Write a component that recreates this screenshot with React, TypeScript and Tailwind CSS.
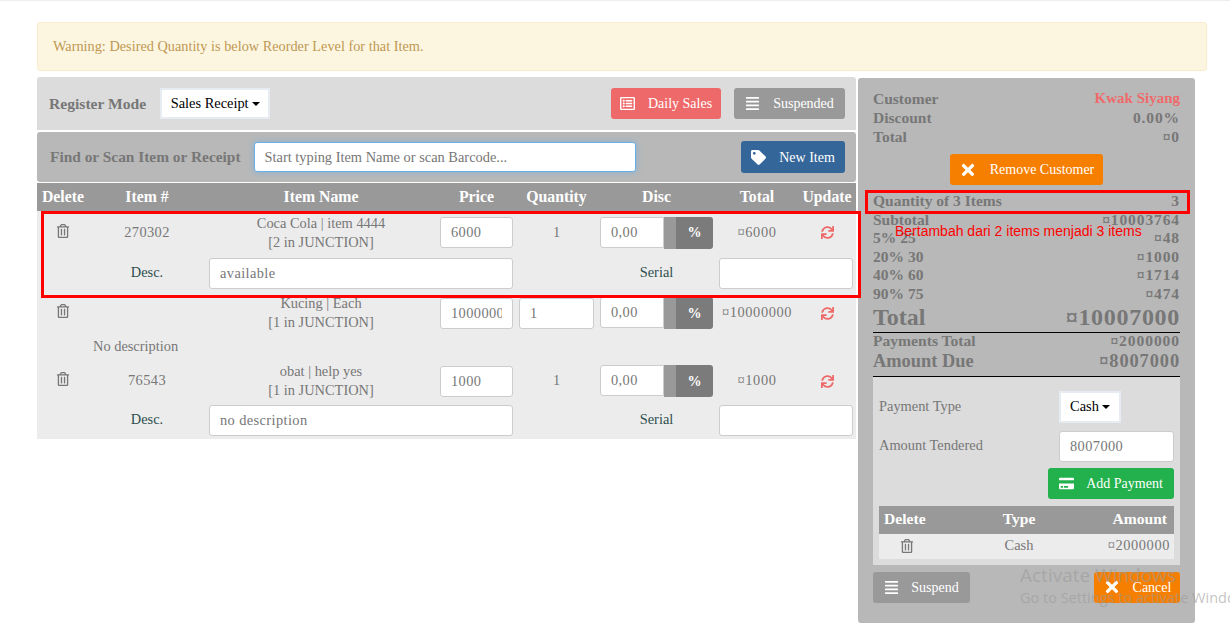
import type { FC, ReactNode } from 'react'
import { FaAlignJustify, FaCreditCard, FaRegListAlt, FaRegTrashAlt, FaSync, FaTag, FaTimes } from 'react-icons/fa'

const COLS = 'grid grid-cols-[52px_116px_232px_79px_81px_119px_82px_58px] items-center'

const Field: FC<{ value?: string; className?: string }> = ({ value = '', className = '' }) => (
  <input
    readOnly
    value={value}
    className={`h-[31px] rounded-[3px] border border-[#ccc] bg-white px-[10px] text-[14.4px] tracking-[0.4px] text-[#777] outline-none ${className}`}
  />
)

const Btn: FC<{ icon: ReactNode; label: string; className: string }> = ({ icon, label, className }) => (
  <button className={`flex h-[31px] items-center rounded-[3px] text-[14px] text-white ${className}`}>
    {icon}
    <span>{label}</span>
  </button>
)

const Trash = () => <FaRegTrashAlt className="mx-auto -mt-1 text-[14px] text-[#777]" />
const Refresh = () => <FaSync className="mx-auto text-[13px] text-[#ee6a6a]" />

const DiscInput = () => (
  <div className="mx-auto flex h-[32px] w-[113px]">
    <Field value="0,00" className="w-[64px] rounded-r-none" />
    <div className="w-[12px] bg-[#999]" />
    <div className="flex w-[37px] items-center justify-center rounded-r-[3px] bg-[#7b7b7b] text-[14px] font-bold text-white">%</div>
  </div>
)

const ItemRow: FC<{ no?: string; name: string; stock: string; price: string; qty: ReactNode; total: string; h: string }> = ({ no, name, stock, price, qty, total, h }) => (
  <div className={`${COLS} ${h} text-[14.4px] text-[#777]`}>
    <Trash />
    <div className="text-center tracking-[0.4px]">{no}</div>
    <div className="text-center leading-[19px]">
      <div>{name}</div>
      <div>{stock}</div>
    </div>
    <Field value={price} className="mx-auto w-[73px]" />
    <div className="text-center">{qty}</div>
    <DiscInput />
    <div className="text-center tracking-[0.6px]">{total}</div>
    <Refresh />
  </div>
)

const DescRow: FC<{ value: string; h: string }> = ({ value, h }) => (
  <div className={`${COLS} ${h} text-[14.4px]`}>
    <div />
    <div className="text-center text-[#2f4f4f]">Desc.</div>
    <div className="col-span-2 pl-[4px] pr-[3px]">
      <Field value={value} className="w-full" />
    </div>
    <div />
    <div className="text-center text-[#2f4f4f]">Serial</div>
    <div className="col-span-2 pl-[3px] pr-[3px]">
      <Field className="w-full" />
    </div>
  </div>
)

const Line: FC<{ label: string; value: string; className?: string; valueClass?: string }> = ({ label, value, className = 'text-[15.5px] leading-[19px]', valueClass = 'tracking-[0.9px]' }) => (
  <div className={`flex justify-between font-bold text-[#777] ${className}`}>
    <span>{label}</span>
    <span className={valueClass}>{value}</span>
  </div>
)

export default function App() {
  return (
    <div className="relative h-[631px] overflow-hidden border-t border-[#eee] bg-white font-['Liberation_Serif',serif] text-[14.4px]">
      <div className="ml-[37px] mt-[21px] flex h-[49px] w-[1170px] items-center rounded-[3px] border border-[#faebcc] bg-[#fcf6e1] px-[15px] text-[14.3px] text-[#c09853]">
        Warning: Desired Quantity is below Reorder Level for that Item.
      </div>

      <div className="ml-[37px] mt-[6px] flex gap-[2px]">
        <div className="w-[819px]">
          <div className="flex h-[53px] items-center rounded-t-[3px] bg-[#dcdcdc] pl-[12px] pr-[11px]">
            <span className="text-[15.6px] font-bold text-[#777]">Register Mode</span>
            <button className="ml-[14px] flex h-[31px] w-[110px] items-center justify-center gap-[3px] border-2 border-[#e6ecf2] bg-white text-[14.4px] text-black">
              Sales Receipt
              <span className="border-x-[4px] border-t-[4px] border-x-transparent border-t-black" />
            </button>
            <Btn icon={<FaRegListAlt className="mr-[13px] text-[15px]" />} label="Daily Sales" className="ml-auto w-[110px] justify-center bg-[#ee6a6a]" />
            <Btn icon={<FaAlignJustify className="mr-[13px] text-[15px]" />} label="Suspended" className="ml-[13px] w-[111px] justify-center bg-[#999]" />
          </div>

          <div className="mt-[2px] flex h-[50px] items-center rounded-[3px] bg-[#b8b8b8] pl-[13px] pr-[11px]">
            <span className="text-[15.4px] font-bold text-[#777]">Find or Scan Item or Receipt</span>
            <input
              readOnly
              placeholder="Start typing Item Name or scan Barcode..."
              className="ml-[13px] h-[30px] w-[382px] rounded-[3px] border border-[#66afe9] bg-white px-[10px] text-[14.4px] shadow-[0_0_6px_rgba(102,175,233,0.6)] outline-none placeholder:text-[#777]"
            />
            <Btn icon={<FaTag className="mr-[13px] text-[15px]" />} label="New Item" className="ml-auto h-[32px] w-[104px] justify-center bg-[#346699]" />
          </div>

          <div className={`${COLS} mt-px h-[28px] bg-[#999] pb-[1px] text-center text-[15.8px] font-bold text-white`}>
            <div>Delete</div>
            <div>Item #</div>
            <div>Item Name</div>
            <div>Price</div>
            <div>Quantity</div>
            <div>Disc</div>
            <div>Total</div>
            <div>Update</div>
          </div>

          <div className="bg-[#ececec]">
            <ItemRow no="270302" name="Coca Cola | item 4444" stock="[2 in JUNCTION]" price="6000" qty="1" total="¤6000" h="h-[42px] pt-[1px]" />
            <DescRow value="available" h="h-[40px]" />
            <ItemRow name="Kucing | Each" stock="[1 in JUNCTION]" price="1000000" qty={<Field value="1" className="mx-auto w-[75px]" />} total="¤10000000" h="h-[40px]" />
            <div className={`${COLS} h-[28px] text-[14.4px] text-[#777]`}>
              <div className="col-span-2 pl-[56px]">No description</div>
            </div>
            <ItemRow no="76543" name="obat | help yes" stock="[1 in JUNCTION]" price="1000" qty="1" total="¤1000" h="h-[40px]" />
            <DescRow value="no description" h="h-[38px]" />
          </div>
        </div>

        <div className="mt-px h-[545px] w-[337px] rounded-[3px] bg-[#b8b8b8] px-[15px] pt-[11px]">
          <Line label="Customer" value="Kwak Siyang" valueClass="text-[15px] text-[#ee6a6a]" />
          <Line label="Discount" value="0.00%" />
          <Line label="Total" value="¤0" />
          <div className="mt-[8px] flex justify-center">
            <Btn icon={<FaTimes className="mr-[13px] text-[18px]" />} label="Remove Customer" className="w-[153px] justify-center bg-[#f77f00]" />
          </div>
          <div className="mt-[7px] border-t border-black">
            <div className="-mt-px">
              <Line label="Quantity of 3 Items" value="3" className="text-[15.5px] leading-[18.6px]" />
              <Line label="Subtotal" value="¤10003764" className="text-[15.5px] leading-[18.6px]" />
              <Line label="5% 25" value="¤48" className="text-[15.5px] leading-[18.6px]" />
              <Line label="20% 30" value="¤1000" className="text-[15.5px] leading-[18.6px]" />
              <Line label="40% 60" value="¤1714" className="text-[15.5px] leading-[18.6px]" />
              <Line label="90% 75" value="¤474" className="text-[15.5px] leading-[18.6px]" />
            </div>
          </div>
          <Line label="Total" value="¤10007000" className="text-[24px] leading-[26px]" valueClass="tracking-[0.7px]" />
          <div className="mt-[2px] border-t border-black">
            <div className="-mt-[2px]">
              <Line label="Payments Total" value="¤2000000" className="text-[15.6px] leading-[19px]" />
              <Line label="Amount Due" value="¤8007000" className="mt-px text-[18.4px] leading-[21px]" />
            </div>
          </div>

          <div className="mt-[4px] h-[189px] border-t border-black bg-[#dcdcdc] px-[6px] pt-[14px] text-[#777]">
            <div className="flex h-[32px] items-center justify-between">
              <span>Payment Type</span>
              <button className="mr-[53px] flex h-[32px] w-[62px] items-center justify-center gap-[3px] border-2 border-[#e6ecf2] bg-white text-[14.4px] text-black">
                Cash
                <span className="border-x-[4px] border-t-[4px] border-x-transparent border-t-black" />
              </button>
            </div>
            <div className="mt-[8px] flex h-[31px] items-center justify-between">
              <span>Amount Tendered</span>
              <Field value="8007000" className="w-[115px]" />
            </div>
            <div className="mt-[6px] flex justify-end">
              <Btn icon={<FaCreditCard className="mr-[12px] text-[15px]" />} label="Add Payment" className="w-[126px] justify-center bg-[#22b14c]" />
            </div>
            <div className="mt-[7px] grid h-[28px] grid-cols-[85px_110px_100px] items-center bg-[#999] pb-[1px] text-[15.6px] font-bold text-white">
              <div className="pl-[5px]">Delete</div>
              <div className="text-center">Type</div>
              <div className="pr-[7px] text-right">Amount</div>
            </div>
            <div className="grid h-[25px] grid-cols-[85px_110px_100px] items-center bg-[#ececec]">
              <FaRegTrashAlt className="ml-[21px] text-[14px] text-[#777]" />
              <div className="text-center">Cash</div>
              <div className="pr-[4px] text-right tracking-[0.6px]">¤2000000</div>
            </div>
          </div>

          <div className="mt-[7px] flex justify-between">
            <Btn icon={<FaAlignJustify className="mr-[12px] text-[15px]" />} label="Suspend" className="w-[97px] justify-center bg-[#999]" />
            <Btn icon={<FaTimes className="mr-[12px] text-[18px]" />} label="Cancel" className="w-[86px] justify-center bg-[#f77f00]" />
          </div>
        </div>
      </div>

      {/* annotations pasted over the screenshot */}
      <div className="pointer-events-none absolute left-[41px] top-[210px] h-[87px] w-[820px] border-[3px] border-[#f00]" />
      <div className="pointer-events-none absolute left-[865px] top-[189px] h-[24px] w-[325px] border-[3px] border-[#f00]" />
      <div className="absolute left-[895px] top-[220px] font-['Liberation_Sans',sans-serif] text-[14px] text-[#f00]">Bertambah dari 2 items menjadi 3 items</div>
      <div className="pointer-events-none absolute left-[1020px] top-[561px] whitespace-nowrap font-['Open_Sans',sans-serif] text-[#9a9a9a]/60">
        <div className="text-[19px] leading-[26px]">Activate Windows</div>
        <div className="text-[14.5px] leading-[20px]">Go to Settings to activate Windows.</div>
      </div>
    </div>
  )
}
